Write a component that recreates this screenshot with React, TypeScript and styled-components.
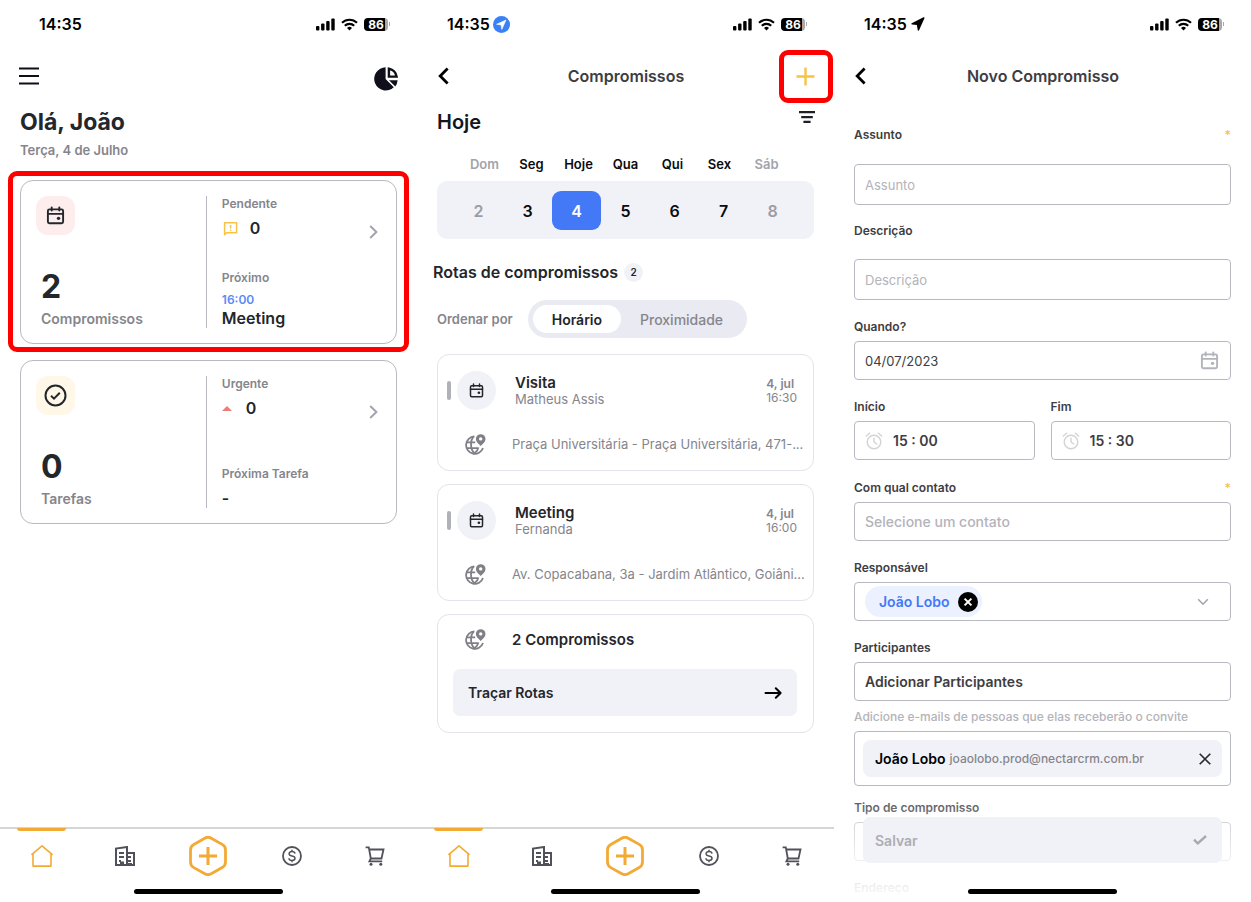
import React from "react";
import styled, { createGlobalStyle, css } from "styled-components";

const color = {
  ink: "#23262b",
  text: "#3d3d43",
  muted: "#85858c",
  faint: "#b3b3ba",
  line: "#b9b9c2",
  softLine: "#e3e3ea",
  surface: "#f1f2f7",
  blue: "#4378f7",
  orange: "#f3aa34",
  yellow: "#f8c246",
  red: "#ff0000",
};

const GlobalStyle = createGlobalStyle`
  *, *::before, *::after { box-sizing: border-box; }
  body {
    margin: 0;
    background: #fff;
    color: ${color.ink};
    font-family: Inter, "Liberation Sans", sans-serif;
  }
  button, input, select { font: inherit; color: inherit; }
  button { border: 0; background: none; padding: 0; cursor: pointer; }
  h1, h2, h3, p { margin: 0; }
  svg { display: block; flex: none; }
`;

/* ---------- shared frame ---------- */

const Screens = styled.main`
  display: grid;
  grid-template-columns: repeat(3, minmax(0, 1fr));
  height: 100vh;
  overflow: hidden;
`;

const Screen = styled.section`
  position: relative;
  display: flex;
  flex-direction: column;
  min-height: 0;
  overflow: hidden;
`;

const StatusBar = styled.div<{ $inset?: number }>`
  flex: none;
  display: flex;
  align-items: center;
  justify-content: space-between;
  height: 48px;
  padding: 0 27px 0 ${(p) => p.$inset ?? 30}px;
  color: #000;
`;

const Clock = styled.span`
  display: flex;
  align-items: center;
  gap: 3px;
  font-size: 16px;
  line-height: 20px;
  font-weight: 600;
`;

const StatusIcons = styled.span`
  display: flex;
  align-items: center;
  gap: 6px;
`;

const Battery = styled.span`
  display: flex;
  align-items: center;
  gap: 1px;
  &::after {
    content: "";
    width: 1px;
    height: 4px;
    background: #a9a9ad;
  }
`;

const BatteryLevel = styled.span`
  width: 24px;
  height: 13px;
  border-radius: 4px;
  background: linear-gradient(to right, #000 88%, #a9a9ad 88%);
  color: #fff;
  font-size: 12px;
  line-height: 13px;
  font-weight: 700;
  text-align: center;
`;

const Highlight = styled.span<{ $inset: string }>`
  position: absolute;
  inset: ${(p) => p.$inset};
  border: 5px solid ${color.red};
  border-radius: 9px;
  pointer-events: none;
`;

const Header = styled.header`
  flex: none;
  display: grid;
  grid-template-columns: 1fr auto 1fr;
  align-items: center;
  height: 56px;
  padding: 0 19px 0 20px;
`;

const HeaderTitle = styled.h1`
  color: ${color.text};
  font-size: 16px;
  line-height: 20px;
  font-weight: 600;
`;

const HeaderAction = styled.button`
  position: relative;
  justify-self: end;
`;

const Spacer = styled.div`
  flex: 1;
`;

const HomeIndicator = styled.div`
  flex: none;
  width: 149px;
  height: 5px;
  margin: 0 auto 8px;
  border-radius: 3px;
  background: #000;
`;

const TabBar = styled.nav`
  flex: none;
  display: grid;
  grid-template-columns: repeat(5, 1fr);
  height: 62px;
  border-top: 2px solid #d6d6d6;
`;

const Tab = styled.a<{ $active?: boolean }>`
  position: relative;
  display: flex;
  align-items: center;
  justify-content: center;
  height: 54px;
  color: ${(p) => (p.$active ? color.orange : "#51515b")};
  ${(p) =>
    p.$active &&
    css`
      &::before {
        content: "";
        position: absolute;
        top: -1px;
        left: 17px;
        right: 17px;
        height: 3px;
        border-radius: 0 0 3px 3px;
        background: ${color.orange};
      }
    `}
`;

/* ---------- icons ---------- */

const SignalIcon = () => (
  <svg width="19" height="13" viewBox="0 0 19 13" fill="currentColor">
    <rect x="0" y="8" width="3.4" height="4.4" rx="1" />
    <rect x="5.1" y="5.6" width="3.4" height="6.8" rx="1" />
    <rect x="10.2" y="3" width="3.4" height="9.4" rx="1" />
    <rect x="15.3" y="0.4" width="3.4" height="12" rx="1" />
  </svg>
);

const WifiIcon = () => (
  <svg width="17" height="13" viewBox="0 0 17 13" fill="none" stroke="currentColor" strokeWidth="2.2">
    <path d="M1 4.8a10.8 10.8 0 0 1 15 0" />
    <path d="M3.8 7.8a6.8 6.8 0 0 1 9.4 0" />
    <path d="M8.5 12.4 6 9.9a3.6 3.6 0 0 1 5 0z" fill="currentColor" stroke="none" />
  </svg>
);

const LocationBadge = () => (
  <svg width="17" height="17" viewBox="0 0 17 17">
    <circle cx="8.5" cy="8.5" r="8.5" fill="#3a80f6" />
    <path d="M13 4 3.6 8.3l4.5.6.7 4.5z" fill="#fff" stroke="#fff" strokeWidth=".6" strokeLinejoin="round" />
  </svg>
);

const LocationArrow = () => (
  <svg width="15" height="14" viewBox="0 0 15 14">
    <path d="M13.8.9 2 6.8l5.5.6.9 5.6z" fill="currentColor" stroke="currentColor" strokeWidth="1.4" strokeLinejoin="round" />
  </svg>
);

const MenuIcon = () => (
  <svg width="20" height="18" viewBox="0 0 20 18" stroke="#0e0f1a" strokeWidth="2.2">
    <path d="M0 1.5h20M0 9h20M0 16.5h20" />
  </svg>
);

const PieIcon = () => (
  <svg width="24" height="24" viewBox="0 0 24 24" fill="#0e0f1a">
    <path d="M11.6.3a11.6 11.6 0 1 0 8.2 20L11.6 12z" />
    <path
      d="M14.9 1.7v7.9h7.7a10 10 0 0 0-7.7-7.9z"
      fill="none"
      stroke="#0e0f1a"
      strokeWidth="2.4"
    />
    <path d="M15 13.2h8.6a11.4 11.4 0 0 1-2.3 6.2z" />
  </svg>
);

const CalendarIcon = ({ size, stroke = color.ink }: { size: number; stroke?: string }) => (
  <svg width={size} height={size} viewBox="0 0 20 20" fill="none" stroke={stroke} strokeWidth="2" strokeLinecap="round">
    <rect x="2" y="3.6" width="16" height="14.6" rx="1.6" />
    <path d="M2 8.3h16M6 1.4v3.4M14 1.4v3.4" />
    <circle cx="13.2" cy="13" r="1.8" fill={stroke} stroke="none" />
  </svg>
);

const CheckCircleIcon = () => (
  <svg width="23" height="23" viewBox="0 0 23 23" fill="none" stroke={color.ink} strokeWidth="2">
    <circle cx="11.5" cy="11.5" r="10" />
    <path d="m7 11.8 3 2.9 5.8-6" />
  </svg>
);

const AlertBubbleIcon = () => (
  <svg width="16" height="15" viewBox="-1 0 16 15" fill="none" stroke={color.yellow} strokeWidth="1.5" strokeLinejoin="round">
    <path d="M1.6 13.8V1.8h12v10h-10z" />
    <path d="M7.6 4v3.6M7.6 8.7v1.2" />
  </svg>
);

const ChevronIcon = ({ width, height, d, stroke, weight }: { width: number; height: number; d: string; stroke: string; weight: number }) => (
  <svg width={width} height={height} viewBox={`0 0 ${width} ${height}`} fill="none" stroke={stroke} strokeWidth={weight}>
    <path d={d} />
  </svg>
);

const BackIcon = () => <ChevronIcon width={14} height={18} d="M10.6 1.6 3.2 9l7.4 7.4" stroke="#000" weight={2.8} />;
const NextIcon = () => <ChevronIcon width={9} height={14} d="m1.2 1 6.2 6-6.2 6" stroke="#a4a4b0" weight={2} />;
const DownIcon = () => <ChevronIcon width={12} height={8} d="m1.2 1.2 4.8 5 4.8-5" stroke="#a4a4ae" weight={1.6} />;

const PlusIcon = () => (
  <svg width="19" height="19" viewBox="0 0 19 19" stroke={color.yellow} strokeWidth="2.4">
    <path d="M9.5.5v18M.5 9.5h18" />
  </svg>
);

const FilterIcon = () => (
  <svg width="16" height="12" viewBox="0 0 16 12" stroke="#1e2028" strokeWidth="2.2">
    <path d="M0 1.1h16M2.2 6.100h11.6M4.4 10.900h7.2" />
  </svg>
);

const GlobePinIcon = () => (
  <svg width="21" height="21" viewBox="0 0 21 21" fill="none" stroke="#7f7f87" strokeWidth="1.8">
    <path d="M9.4 2.400A8.700 8.700 0 1 0 18 14" />
    <path d="M8.800 2.400C5.200 6 4.800 15 9.400 19.500M1 8.400h9.200M1.700 14.200h11.600M9.400 19.500c2.200-1.600 3.500-3.600 4-6.200" />
    <path
      d="M15.700.2a4.800 4.800 0 0 0-4.800 4.800c0 2.700 2.500 4.800 4.800 6.900 2.300-2.100 4.800-4.200 4.800-6.900A4.800 4.800 0 0 0 15.700.2z"
      fill="#7f7f87"
      stroke="none"
    />
    <circle cx="15.700" cy="4.900" r="1.700" fill="#fff" stroke="none" />
  </svg>
);

const ArrowIcon = () => (
  <svg width="18" height="12" viewBox="0 0 18 12" fill="none" stroke="#000" strokeWidth="2" strokeLinecap="round" strokeLinejoin="round">
    <path d="M1.500 6h14.900M11.800 1.200 16.600 6l-4.800 4.800" />
  </svg>
);

const ClockIcon = () => (
  <svg width="18" height="18" viewBox="0 0 18 18" fill="none" stroke="#d3d3d7" strokeWidth="1.400" strokeLinecap="round">
    <circle cx="9" cy="10" r="6.800" />
    <path d="M9 6.200V10l2.800 2M1.300 4 4.600 1.300M16.700 4l-3.300-2.700" />
  </svg>
);

const CrossCircleIcon = () => (
  <svg width="20" height="20" viewBox="0 0 20 20" stroke="#fff" strokeWidth="2">
    <circle cx="10" cy="10" r="10" fill="#000" stroke="none" />
    <path d="m6.600 6.600 6.800 6.800M13.400 6.600l-6.800 6.800" />
  </svg>
);

const CrossIcon = () => (
  <svg width="12" height="12" viewBox="0 0 12 12" stroke="#26262c" strokeWidth="1.600">
    <path d="m.7.7 10.600 10.600M11.300.7.7 11.300" />
  </svg>
);

const CheckIcon = () => (
  <svg width="14" height="10" viewBox="0 0 14 10" fill="none" stroke="#a9a9ae" strokeWidth="2.400">
    <path d="m1 4.600 3.800 3.800L13 1" />
  </svg>
);

const HomeIcon = () => (
  <svg width="22" height="22" viewBox="0 0 22 22" fill="none" stroke="currentColor" strokeWidth="1.600" strokeLinejoin="round" strokeLinecap="round">
    <path d="M.9 9.300 11 .9l10.100 8.400M2 8.600v12.500h18V8.600" />
  </svg>
);

const BuildingIcon = () => (
  <svg width="20" height="20" viewBox="0 0 20 20" fill="none" stroke="currentColor" strokeWidth="2">
    <path d="M1 19V2.600L12 1v18M12 7h7v12M0 19h20" />
    <path d="M4 7h5M4 11h5M12 11h4M12 15h4M4 15h2" />
    <path d="M5 15.500h4V19H5zM13 17h4v2h-4z" fill="currentColor" stroke="none" />
  </svg>
);

const HexPlusIcon = () => (
  <svg width="38" height="40" viewBox="0 0 38 40" fill="none" stroke="currentColor">
    <path
      d="M15.800 2.200a6.500 6.500 0 0 1 6.400 0l11 6.200a6.300 6.300 0 0 1 3.300 5.600v12a6.300 6.300 0 0 1-3.300 5.600l-11 6.200a6.500 6.500 0 0 1-6.400 0l-11-6.200A6.300 6.300 0 0 1 1.500 26V14a6.300 6.300 0 0 1 3.300-5.600z"
      strokeWidth="2.800"
    />
    <path d="M19 11v18M10 20h18" strokeWidth="3" />
  </svg>
);

const DollarIcon = () => (
  <svg width="20" height="20" viewBox="0 0 20 20" fill="none" stroke="currentColor">
    <circle cx="10" cy="10" r="9" strokeWidth="1.800" />
    <path d="M13 7.600C12.800 6.300 11.700 5.600 10 5.600S7.100 6.400 7.100 7.800c0 1.500 1.200 1.900 2.900 2.200s3 .8 3 2.300c0 1.300-1.200 2.100-3 2.100s-3-.8-3.100-2.200M10 3.800v2M10 14.200v2" strokeWidth="1.500" />
  </svg>
);

const CartIcon = () => (
  <svg width="20" height="20" viewBox="0 0 20 20" fill="none" stroke="currentColor" strokeWidth="1.800">
    <path d="M.6 1.300h3.200l2 11.200h10.700l2-9H4.300M5.800 12.500l-1.400 2.900h12.800" />
    <circle cx="6" cy="18.300" r="1.500" fill="currentColor" stroke="none" />
    <circle cx="15.800" cy="18.300" r="1.500" fill="currentColor" stroke="none" />
  </svg>
);

/* ---------- shared pieces ---------- */

const PhoneStatus = ({ inset, badge }: { inset?: number; badge?: React.ReactNode }) => (
  <StatusBar $inset={inset}>
    <Clock>14:35{badge}</Clock>
    <StatusIcons>
      <SignalIcon />
      <WifiIcon />
      <Battery>
        <BatteryLevel>86</BatteryLevel>
      </Battery>
    </StatusIcons>
  </StatusBar>
);

const tabs = [
  { name: "Início", icon: <HomeIcon /> },
  { name: "Empresas", icon: <BuildingIcon /> },
  { name: "Adicionar", icon: <HexPlusIcon /> },
  { name: "Vendas", icon: <DollarIcon /> },
  { name: "Produtos", icon: <CartIcon /> },
];

const AddTab = styled(Tab)`
  color: ${color.orange};
`;

const BottomBar = () => (
  <>
    <TabBar>
      {tabs.map((t, i) => {
        const Item = i === 2 ? AddTab : Tab;
        return (
          <Item key={t.name} href="#" aria-label={t.name} $active={i === 0}>
            {t.icon}
          </Item>
        );
      })}
    </TabBar>
    <HomeIndicator />
  </>
);

/* ---------- home ---------- */

const HomeTop = styled.header`
  display: flex;
  justify-content: space-between;
  align-items: flex-start;
  padding: 19px 19px 0;
`;

const Greeting = styled.h1`
  margin: 15px 20px 0;
  font-size: 23px;
  line-height: 32px;
  font-weight: 700;
`;

const Today = styled.p`
  margin: 4px 20px 22px;
  color: ${color.muted};
  font-size: 13px;
  line-height: 16px;
  font-weight: 600;
`;

const Summaries = styled.div`
  display: flex;
  flex-direction: column;
  gap: 16px;
  padding: 0 20px;
`;

const SummaryCard = styled.article`
  position: relative;
  display: grid;
  grid-template-columns: 51fr 49fr auto;
  min-height: 164px;
  padding: 15px 18px 15px 15px;
  border: 1px solid ${color.line};
  border-radius: 13px;
`;

const SummaryTotal = styled.div`
  display: flex;
  flex-direction: column;
  justify-content: space-between;
`;

const IconTile = styled.div<{ $tint: string }>`
  display: grid;
  place-items: center;
  width: 39px;
  height: 39px;
  border-radius: 12px;
  background: ${(p) => p.$tint};
`;

const Total = styled.div`
  display: flex;
  flex-direction: column;
  gap: 5px;
  padding-left: 5px;
`;

const TotalNumber = styled.strong`
  font-size: 32px;
  line-height: 36px;
  font-weight: 700;
`;

const TotalLabel = styled.span`
  color: ${color.muted};
  font-size: 14px;
  line-height: 18px;
  font-weight: 600;
`;

const SummaryDetail = styled(SummaryTotal)`
  padding-left: 15px;
  border-left: 1px solid ${color.line};
`;

const Detail = styled.div`
  display: flex;
  flex-direction: column;
`;

const DetailLabel = styled.span`
  margin-bottom: 6px;
  color: ${color.muted};
  font-size: 12px;
  line-height: 16px;
  font-weight: 600;
`;

const DetailTime = styled.span`
  color: #5b8af6;
  font-size: 12px;
  line-height: 16px;
  font-weight: 600;
`;

const DetailValue = styled.span<{ $gap?: number }>`
  display: flex;
  align-items: center;
  gap: ${(p) => p.$gap ?? 0}px;
  font-size: 16px;
  line-height: 20px;
  font-weight: 600;
`;

const UrgentMark = styled.span`
  width: 10px;
  border: 5px solid transparent;
  border-top: 0;
  border-bottom-color: #f07a74;
`;

const OpenButton = styled.button`
  align-self: start;
  margin-top: 29px;
`;

const HomeScreen = () => (
  <Screen>
    <PhoneStatus inset={39} />
    <HomeTop>
      <button aria-label="Menu">
        <MenuIcon />
      </button>
      <button aria-label="Relatórios">
        <PieIcon />
      </button>
    </HomeTop>
    <Greeting>Olá, João</Greeting>
    <Today>Terça, 4 de Julho</Today>
    <Summaries>
      <SummaryCard>
        <SummaryTotal>
          <IconTile $tint="#fdeeed">
            <CalendarIcon size={19} />
          </IconTile>
          <Total>
            <TotalNumber>2</TotalNumber>
            <TotalLabel>Compromissos</TotalLabel>
          </Total>
        </SummaryTotal>
        <SummaryDetail>
          <Detail>
            <DetailLabel>Pendente</DetailLabel>
            <DetailValue $gap={12}>
              <AlertBubbleIcon />0
            </DetailValue>
          </Detail>
          <Detail>
            <DetailLabel>Próximo</DetailLabel>
            <DetailTime>16:00</DetailTime>
            <DetailValue>Meeting</DetailValue>
          </Detail>
        </SummaryDetail>
        <OpenButton aria-label="Abrir compromissos">
          <NextIcon />
        </OpenButton>
        <Highlight $inset="-10px -13px -9px" />
      </SummaryCard>
      <SummaryCard>
        <SummaryTotal>
          <IconTile $tint="#fff8e8">
            <CheckCircleIcon />
          </IconTile>
          <Total>
            <TotalNumber>0</TotalNumber>
            <TotalLabel>Tarefas</TotalLabel>
          </Total>
        </SummaryTotal>
        <SummaryDetail>
          <Detail>
            <DetailLabel>Urgente</DetailLabel>
            <DetailValue $gap={14}>
              <UrgentMark />0
            </DetailValue>
          </Detail>
          <Detail>
            <DetailLabel>Próxima Tarefa</DetailLabel>
            <DetailValue>-</DetailValue>
          </Detail>
        </SummaryDetail>
        <OpenButton aria-label="Abrir tarefas">
          <NextIcon />
        </OpenButton>
      </SummaryCard>
    </Summaries>
    <Spacer />
    <BottomBar />
  </Screen>
);

/* ---------- appointments ---------- */

const DayHeading = styled.div`
  display: flex;
  justify-content: space-between;
  align-items: flex-start;
  padding: 4px 19px 0 20px;
`;

const DayTitle = styled.h2`
  color: #14161c;
  font-size: 20px;
  line-height: 28px;
  font-weight: 600;
`;

const FilterButton = styled.button`
  padding-top: 3px;
`;

const WeekNames = styled.div`
  display: grid;
  grid-template-columns: repeat(7, 1fr);
  margin: 20px 44px 9px;
`;

const WeekName = styled.span<{ $off?: boolean }>`
  color: ${(p) => (p.$off ? "#a3a3aa" : "#0b0b0d")};
  font-size: 13px;
  line-height: 16px;
  font-weight: 600;
  text-align: center;
`;

const WeekDays = styled.div`
  display: grid;
  grid-template-columns: repeat(7, 1fr);
  margin: 0 20px;
  padding: 10px 17px 9px;
  border-radius: 10px;
  background: ${color.surface};
`;

const Day = styled.button<{ $off?: boolean; $on?: boolean }>`
  height: 39px;
  border-radius: 9px;
  background: ${(p) => (p.$on ? color.blue : "transparent")};
  color: ${(p) => (p.$on ? "#fff" : p.$off ? "#9c9ca3" : "#0b0b0d")};
  font-size: 16px;
  font-weight: 600;
`;

const SectionTitle = styled.h2`
  display: flex;
  align-items: center;
  gap: 6px;
  margin: 23px 16px 18px;
  font-size: 16px;
  line-height: 20px;
  font-weight: 600;
`;

const Count = styled.span`
  width: 19px;
  height: 19px;
  border-radius: 50%;
  background: ${color.surface};
  font-size: 10px;
  line-height: 19px;
  text-align: center;
`;

const SortRow = styled.div`
  display: flex;
  align-items: center;
  gap: 15px;
  margin: 0 20px 16px;
`;

const SortLabel = styled.span`
  color: ${color.muted};
  font-size: 13px;
  line-height: 16px;
  font-weight: 600;
`;

const Segmented = styled.div`
  display: flex;
  height: 38px;
  padding: 5px;
  border-radius: 19px;
  background: #eaeaf2;
`;

const Segment = styled.button<{ $on?: boolean }>`
  padding: 0 19px;
  border-radius: 14px;
  background: ${(p) => (p.$on ? "#fff" : "transparent")};
  color: ${(p) => (p.$on ? color.ink : color.muted)};
  font-size: 14px;
  font-weight: ${(p) => (p.$on ? 600 : 500)};
`;

const Cards = styled.div`
  display: flex;
  flex-direction: column;
  gap: 13px;
  padding: 0 20px;
`;

const VisitCard = styled.article`
  padding: 16px 16px 16px 0;
  border: 1px solid ${color.softLine};
  border-radius: 12px;
`;

const VisitTop = styled.div`
  display: flex;
  align-items: center;
  padding-left: 9px;
`;

const VisitBar = styled.span`
  width: 4px;
  height: 19px;
  margin-right: 6px;
  border-radius: 2px;
  background: #b0b0b8;
`;

const VisitIcon = styled.span`
  display: grid;
  place-items: center;
  width: 39px;
  height: 39px;
  margin-right: 19px;
  border-radius: 50%;
  background: ${color.surface};
`;

const VisitText = styled.div`
  flex: 1;
`;

const VisitTitle = styled.h3`
  font-size: 15px;
  line-height: 17px;
  font-weight: 600;
`;

const VisitPerson = styled.p`
  color: ${color.muted};
  font-size: 13px;
  line-height: 16px;
  font-weight: 400;
`;

const VisitDate = styled.p`
  color: ${color.muted};
  font-size: 12px;
  line-height: 14px;
  font-weight: 400;
  strong {
    display: block;
    font-weight: 600;
  }
`;

const PlaceRow = styled.div`
  display: flex;
  align-items: center;
  gap: 26px;
  height: 20px;
  margin-top: 24px;
  padding-left: 27px;
`;

const Address = styled.p`
  flex: 1;
  min-width: 0;
  white-space: nowrap;
  color: ${color.muted};
  font-size: 13px;
  line-height: 20px;
  font-weight: 400;
`;

const RouteRow = styled(PlaceRow)`
  height: 17px;
  margin-top: 0;
`;

const RouteButton = styled.button`
  display: flex;
  align-items: center;
  justify-content: space-between;
  width: calc(100% - 15px);
  height: 47px;
  margin: 21px 0 0 15px;
  padding: 0 15px;
  border-radius: 7px;
  background: ${color.surface};
  font-size: 14px;
  font-weight: 600;
`;

const week = [
  { name: "Dom", day: 2, off: true },
  { name: "Seg", day: 3 },
  { name: "Hoje", day: 4, on: true },
  { name: "Qua", day: 5 },
  { name: "Qui", day: 6 },
  { name: "Sex", day: 7 },
  { name: "Sáb", day: 8, off: true },
];

const visits = [
  {
    title: "Visita",
    person: "Matheus Assis",
    time: "16:30",
    address: "Praça Universitária - Praça Universitária, 471-...",
  },
  {
    title: "Meeting",
    person: "Fernanda",
    time: "16:00",
    address: "Av. Copacabana, 3a - Jardim Atlântico, Goiâni...",
  },
];

const AppointmentsScreen = () => (
  <Screen>
    <PhoneStatus badge={<LocationBadge />} />
    <Header>
      <button aria-label="Voltar">
        <BackIcon />
      </button>
      <HeaderTitle>Compromissos</HeaderTitle>
      <HeaderAction aria-label="Novo compromisso">
        <PlusIcon />
        <Highlight $inset="-17px -18px -17px -17px" />
      </HeaderAction>
    </Header>
    <DayHeading>
      <DayTitle>Hoje</DayTitle>
      <FilterButton aria-label="Filtrar">
        <FilterIcon />
      </FilterButton>
    </DayHeading>
    <WeekNames>
      {week.map((d) => (
        <WeekName key={d.name} $off={d.off}>
          {d.name}
        </WeekName>
      ))}
    </WeekNames>
    <WeekDays>
      {week.map((d) => (
        <Day key={d.day} $off={d.off} $on={d.on}>
          {d.day}
        </Day>
      ))}
    </WeekDays>
    <SectionTitle>
      Rotas de compromissos <Count>2</Count>
    </SectionTitle>
    <SortRow>
      <SortLabel>Ordenar por</SortLabel>
      <Segmented>
        <Segment $on>Horário</Segment>
        <Segment>Proximidade</Segment>
      </Segmented>
    </SortRow>
    <Cards>
      {visits.map((v) => (
        <VisitCard key={v.title}>
          <VisitTop>
            <VisitBar />
            <VisitIcon>
              <CalendarIcon size={15} />
            </VisitIcon>
            <VisitText>
              <VisitTitle>{v.title}</VisitTitle>
              <VisitPerson>{v.person}</VisitPerson>
            </VisitText>
            <VisitDate>
              <strong>4, jul</strong>
              {v.time}
            </VisitDate>
          </VisitTop>
          <PlaceRow>
            <GlobePinIcon />
            <Address>{v.address}</Address>
          </PlaceRow>
        </VisitCard>
      ))}
      <VisitCard>
        <RouteRow>
          <GlobePinIcon />
          <VisitTitle>2 Compromissos</VisitTitle>
        </RouteRow>
        <RouteButton>
          Traçar Rotas
          <ArrowIcon />
        </RouteButton>
      </VisitCard>
    </Cards>
    <Spacer />
    <BottomBar />
  </Screen>
);

/* ---------- new appointment ---------- */

const Form = styled.form`
  display: flex;
  flex-direction: column;
  padding: 23px 20px 0;
`;

const Field = styled.div<{ $space?: number; $gap?: number }>`
  display: flex;
  flex-direction: column;
  flex: none;
  gap: ${(p) => p.$gap ?? 6}px;
  margin-bottom: ${(p) => p.$space ?? 19}px;
`;

const Label = styled.label<{ $required?: boolean }>`
  display: flex;
  justify-content: space-between;
  color: ${color.text};
  font-size: 12px;
  line-height: 16px;
  font-weight: 600;
  ${(p) =>
    p.$required &&
    css`
      &::after {
        content: "*";
        color: ${color.yellow};
        font-weight: 600;
      }
    `}
`;

const control = css`
  width: 100%;
  border: 1px solid ${color.line};
  border-radius: 4px;
  background: #fff;
`;

const TextInput = styled.input<{ $tall?: boolean }>`
  ${control}
  height: ${(p) => (p.$tall ? 41 : 39)}px;
  padding: 0 10px;
  font-size: ${(p) => (p.$tall ? 13 : 14)}px;
  font-weight: ${(p) => (p.$tall ? 400 : 500)};
  outline: none;
  &::placeholder {
    color: ${color.faint};
    opacity: 1;
  }
`;

const AddPeopleInput = styled(TextInput)`
  font-weight: 600;
  &::placeholder {
    color: ${color.text};
  }
`;

const IconInput = styled.div<{ $bold?: boolean }>`
  ${control}
  display: flex;
  align-items: center;
  gap: 10px;
  height: 39px;
  padding: 0 11px 0 10px;
  input {
    flex: 1;
    min-width: 0;
    padding: 0;
    border: 0;
    outline: none;
    background: none;
    color: ${color.text};
    font-size: ${(p) => (p.$bold ? 14 : 13)}px;
    font-weight: ${(p) => (p.$bold ? 600 : 400)};
  }
`;

const TimeRow = styled.div`
  display: grid;
  grid-template-columns: repeat(2, minmax(0, 1fr));
  gap: 16px;
`;

const ChipBox = styled(IconInput)`
  justify-content: space-between;
  padding-right: 21px;
`;

const Chip = styled.span`
  display: flex;
  align-items: center;
  gap: 8px;
  height: 31px;
  padding: 0 4px 0 14px;
  border-radius: 16px;
  background: #ebf1fe;
  color: ${color.blue};
  font-size: 14px;
  font-weight: 600;
`;

const Hint = styled.p`
  margin: -11px 0 6px;
  color: ${color.faint};
  font-size: 12px;
  line-height: 16px;
  font-weight: 500;
`;

const PeopleBox = styled.div`
  ${control}
  flex: none;
  margin-bottom: 14px;
  padding: 8px;
`;

const Person = styled.div`
  display: flex;
  align-items: center;
  gap: 4px;
  height: 37px;
  padding: 0 11px 0 12px;
  border-radius: 8px;
  background: ${color.surface};
  color: #000;
  font-size: 14px;
  font-weight: 600;
`;

const Email = styled.span`
  flex: 1;
  color: ${color.muted};
  font-size: 12px;
  font-weight: 500;
`;

const TypeSelect = styled.select`
  ${control}
  height: 39px;
  appearance: none;
`;

const SaveArea = styled.footer`
  position: absolute;
  left: 0;
  right: 0;
  bottom: 0;
  padding: 30px 29px 0;
  background: linear-gradient(to bottom, rgba(255, 255, 255, 0) 0%, rgba(255, 255, 255, 0.75) 60%, rgba(255, 255, 255, 1) 100%);
`;

const SaveButton = styled.button`
  display: flex;
  align-items: center;
  justify-content: space-between;
  width: 100%;
  height: 46px;
  margin-bottom: 26px;
  padding: 0 15px 0 12px;
  border-radius: 7px;
  background: ${color.surface};
  color: #adadb3;
  font-size: 14px;
  font-weight: 600;
`;

const NewAppointmentScreen = () => (
  <Screen>
    <PhoneStatus badge={<LocationArrow />} />
    <Header>
      <button aria-label="Voltar">
        <BackIcon />
      </button>
      <HeaderTitle>Novo Compromisso</HeaderTitle>
    </Header>
    <Form onSubmit={(e) => e.preventDefault()}>
      <Field $gap={21} $space={18}>
        <Label htmlFor="subject" $required>
          Assunto
        </Label>
        <TextInput id="subject" $tall placeholder="Assunto" />
      </Field>
      <Field $gap={20}>
        <Label htmlFor="description">Descrição</Label>
        <TextInput id="description" $tall placeholder="Descrição" />
      </Field>
      <Field>
        <Label htmlFor="date">Quando?</Label>
        <IconInput>
          <input id="date" defaultValue="04/07/2023" />
          <CalendarIcon size={19} stroke="#b3b3bb" />
        </IconInput>
      </Field>
      <TimeRow>
        <Field $space={20}>
          <Label htmlFor="start">Início</Label>
          <IconInput $bold>
            <ClockIcon />
            <input id="start" defaultValue="15 : 00" />
          </IconInput>
        </Field>
        <Field $space={20}>
          <Label htmlFor="end">Fim</Label>
          <IconInput $bold>
            <ClockIcon />
            <input id="end" defaultValue="15 : 30" />
          </IconInput>
        </Field>
      </TimeRow>
      <Field>
        <Label htmlFor="contact" $required>
          Com qual contato
        </Label>
        <TextInput id="contact" placeholder="Selecione um contato" />
      </Field>
      <Field>
        <Label htmlFor="owner">Responsável</Label>
        <ChipBox>
          <Chip>
            João Lobo
            <button type="button" aria-label="Remover João Lobo">
              <CrossCircleIcon />
            </button>
          </Chip>
          <button type="button" id="owner" aria-label="Escolher responsável">
            <DownIcon />
          </button>
        </ChipBox>
      </Field>
      <Field>
        <Label htmlFor="people">Participantes</Label>
        <AddPeopleInput id="people" placeholder="Adicionar Participantes" />
      </Field>
      <Hint>Adicione e-mails de pessoas que elas receberão o convite</Hint>
      <PeopleBox>
        <Person>
          João Lobo
          <Email>joaolobo.prod@nectarcrm.com.br</Email>
          <button type="button" aria-label="Remover participante">
            <CrossIcon />
          </button>
        </Person>
      </PeopleBox>
      <Field>
        <Label htmlFor="type">Tipo de compromisso</Label>
        <TypeSelect id="type" />
      </Field>
      <Label htmlFor="address">Endereço</Label>
    </Form>
    <SaveArea>
      <SaveButton type="button">
        Salvar
        <CheckIcon />
      </SaveButton>
      <HomeIndicator />
    </SaveArea>
  </Screen>
);

export default function App() {
  return (
    <>
      <GlobalStyle />
      <Screens>
        <HomeScreen />
        <AppointmentsScreen />
        <NewAppointmentScreen />
      </Screens>
    </>
  );
}
